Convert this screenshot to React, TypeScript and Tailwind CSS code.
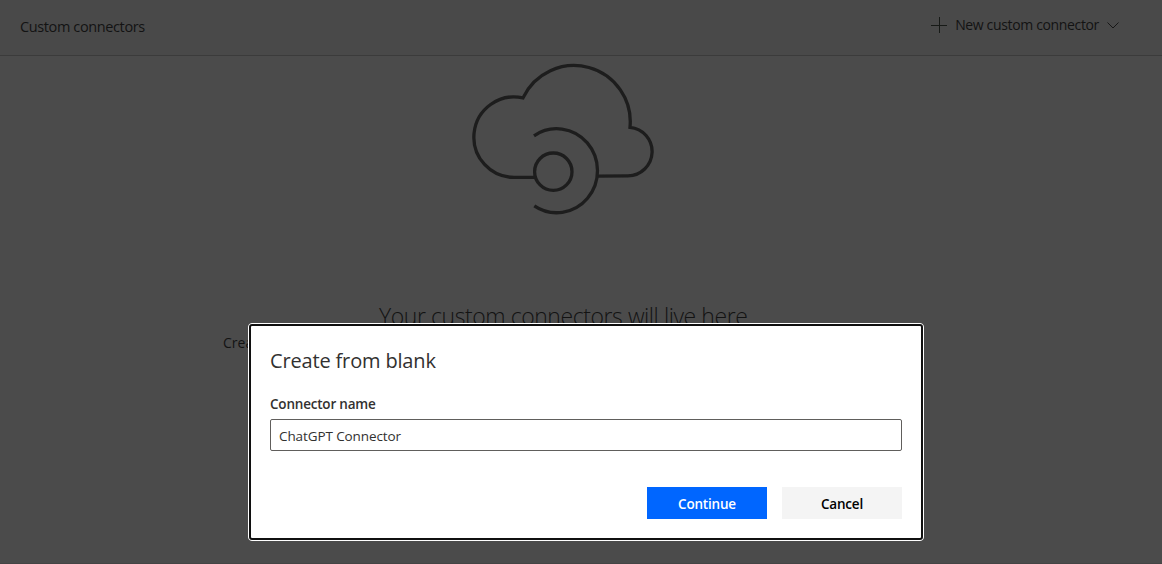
import React from "react";

function Header() {
  return (
    <header className="flex h-14 items-start justify-between border-b border-[#3b3b3b] bg-[#494949] pl-5 pr-[43px] text-[#131313]">
      <h1 className="mt-[15px] whitespace-nowrap text-[14.5px] leading-6 tracking-[-0.38px]">Custom connectors</h1>
      <button className="mt-[13px] flex h-6 items-center whitespace-nowrap text-[14px]">
        <svg className="mr-2 h-4 w-4" viewBox="0 0 16 16" fill="none" stroke="#171a17">
          <path d="M8.5 0v16M0 8.5h16" />
        </svg>
        <span className="leading-6 tracking-[-0.35px]">New custom connector</span>
        <svg className="ml-2 h-3 w-3" viewBox="0 0 12 12" fill="none" stroke="#171717">
          <path d="M0.5 3.5 6 9l5.5-5.5" />
        </svg>
      </button>
    </header>
  );
}

function CloudArt() {
  return (
    <svg className="ml-[470px] mt-[6px] h-[156px] w-[186px]" viewBox="470 62 186 156" fill="none" stroke="#1d1d1d" strokeWidth="3.3">
      <path d="M535 177.4H515A40.25 40.25 0 1 1 523 97.9A56.3 56.3 0 0 1 630 127.3A24.3 24.3 0 0 1 628 175.8L598 176.1" />
      <path d="M534 135.8A40.8 42 0 1 1 534.3 205.8" />
      <circle cx="553.3" cy="171.7" r="18.7" />
    </svg>
  );
}

function CreateDialog() {
  return (
    <section
      role="dialog"
      aria-label="Create from blank"
      className="absolute left-[248px] top-[323px] h-[218px] w-[676px] rounded-[4px] border border-white bg-white"
    >
      <div className="flex h-full flex-col rounded-[3px] border-2 border-[#101010] px-[19px] text-[#323130]">
        <h2 className="mt-[21px] whitespace-nowrap text-[20px] leading-7 tracking-[-0.16px]">Create from blank</h2>
        <label htmlFor="name" className="mt-[19px] whitespace-nowrap text-[13.5px] font-semibold leading-5 tracking-[-0.2px]">
          Connector name
        </label>
        <input
          id="name"
          defaultValue="ChatGPT Connector"
          className="mt-[5px] h-8 w-[632px] shrink-0 rounded-[2px] border border-[#605e5c] px-2 pt-[2px] text-[13.5px] tracking-[-0.1px] outline-none"
        />
        <div className="mt-9 flex gap-[15px] self-end text-[13.5px] font-semibold leading-8 tracking-[-0.2px]">
          <button className="h-8 w-[120px] bg-[#0066ff] pt-[2px] leading-[30px] text-white">Continue</button>
          <button className="h-8 w-[120px] bg-[#f4f4f4] pt-[2px] leading-[30px] text-black">Cancel</button>
        </div>
      </div>
    </section>
  );
}

export default function App() {
  return (
    <div className="relative flex h-[564px] w-[1162px] flex-col overflow-hidden border-b border-[#444444] bg-[#4b4b4b] font-['Open_Sans','Noto_Sans',sans-serif]">
      <Header />
      <main className="text-[#131313]">
        <CloudArt />
        <h2 className="ml-[379px] mt-[82px] whitespace-nowrap text-[23px] font-light leading-8 tracking-[-0.43px]">
          Your custom connectors will live here
        </h2>
        <p className="-mt-px ml-[223px] whitespace-nowrap text-[14px] leading-6">Create</p>
      </main>
      <CreateDialog />
    </div>
  );
}
